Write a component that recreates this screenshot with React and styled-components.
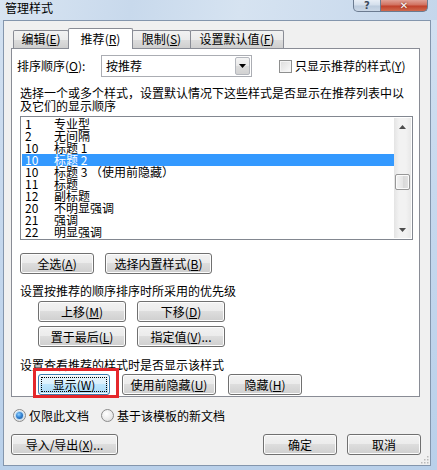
import React from "react";
import styled, { createGlobalStyle, css } from "styled-components";

const GlobalStyle = createGlobalStyle`
  html, body { margin: 0; padding: 0; background: #c9dbef; }
  body { font-family: "Noto Sans CJK SC", "Liberation Sans", sans-serif; font-size: 12px; color: #000; }
  * { box-sizing: border-box; }
`;

const FONT = `"Noto Sans CJK SC", "Liberation Sans", sans-serif`;

const Window = styled.div`
  width: 437px;
  height: 470px;
  display: flex;
  flex-direction: column;
  overflow: hidden;
  background: linear-gradient(180deg, #d3e1f1 0%, #c7d9ee 40%, #b9d0ea 100%);
`;

const TitleBar = styled.div`
  height: 20px;
  display: flex;
  align-items: flex-start;
  padding-left: 5px;
  padding-right: 9px;
  background: linear-gradient(100deg, #d9e5f2 0%, #c8d9ec 30%, #d6e3f1 55%, #c4d6eb 100%);
`;

const Title = styled.div`
  font: 12px/16px ${FONT};
  color: #000;
`;

const Caption = styled.div`
  margin-left: auto;
  display: flex;
`;

const CapButton = styled.div`
  height: 12px;
  display: flex;
  align-items: center;
  justify-content: center;
  border: 1px solid #6b7b90;
  border-top: none;
  font: bold 10px/10px "DejaVu Sans", sans-serif;
  ${(p) =>
    p.$close
      ? css`
          width: 47px;
          border-left: none;
          border-radius: 0 0 5px 0;
          color: #fff;
          background: linear-gradient(180deg, #e0a196 0%, #d1715f 45%, #c0412b 55%, #cf6a4e 100%);
          text-shadow: 0 0 2px #5a1a10;
        `
      : css`
          width: 28px;
          border-radius: 0 0 0 5px;
          color: #3b4a5c;
          background: linear-gradient(180deg, #e8eef6 0%, #d4dfec 45%, #bccbdd 55%, #cbd8e7 100%);
        `}
`;

const Client = styled.div`
  position: relative;
  margin-left: 3px;
  width: 428px;
  height: 446px;
  border: 1px solid #8496ad;
  background: #f0f0f0;
  padding: 7px 9px 0 7px;
  display: flex;
  flex-direction: column;
`;

const TabStrip = styled.div`
  display: flex;
  align-items: flex-start;
  height: 21px;
  margin-bottom: -1px;
  padding-left: 2px;
  position: relative;
  z-index: 1;
`;

const Tab = styled.div`
  width: ${(p) => p.$w}px;
  margin-left: ${(p) => (p.$first ? 0 : -1)}px;
  border: 1px solid #898c95;
  border-bottom: none;
  border-radius: 2px 2px 0 0;
  font: 12px/16px ${FONT};
  text-align: center;
  white-space: nowrap;
  ${(p) =>
    p.$active
      ? css`
          height: 21px;
          background: #fff;
          padding-top: 2px;
          position: relative;
          z-index: 2;
        `
      : css`
          height: 18px;
          margin-top: 2px;
          background: linear-gradient(180deg, #f2f2f2 0%, #ebebeb 50%, #dddddd 51%, #cfcfcf 100%);
          padding-top: 0px;
        `}
`;

const Panel = styled.div`
  width: 409px;
  height: 349px;
  border: 1px solid #898c95;
  background: #fff;
  display: flex;
  flex-direction: column;
`;

const SortRow = styled.div`
  display: flex;
  align-items: center;
  margin-top: 6px;
  margin-left: 5px;
  height: 22px;
`;

const Label = styled.span`
  font: 12px/14px ${FONT};
  white-space: nowrap;
  width: ${(p) => (p.$w ? `${p.$w}px` : "auto")};
`;

const Combo = styled.div`
  width: 151px;
  height: 22px;
  border: 1px solid #abadb3;
  background: #fff;
  display: flex;
  align-items: center;
  padding: 1px;
`;

const ComboText = styled.span`
  flex: 1;
  font: 12px/14px ${FONT};
  padding-left: 3px;
`;

const ComboArrow = styled.div`
  width: 15px;
  height: 18px;
  border: 1px solid #b4b7bd;
  border-radius: 2px;
  background: linear-gradient(180deg, #f4f4f4 0%, #e9e9e9 50%, #dcdcdc 51%, #d2d2d2 100%);
  display: flex;
  align-items: center;
  justify-content: center;
`;

const CheckWrap = styled.label`
  display: flex;
  align-items: center;
  margin-left: 27px;
  gap: 3px;
`;

const Box = styled.span`
  width: 13px;
  height: 13px;
  border: 1px solid #8e8f8f;
  background: linear-gradient(135deg, #dcdcdc 0%, #eeeeee 60%, #fbfbfb 100%);
  box-shadow: inset 0 0 0 1px #f4f4f4;
`;

const Para = styled.div`
  margin-left: 8px;
  width: 393px;
  margin-top: ${(p) => p.$mt}px;
  font: 12px/13px ${FONT};
`;

const ListBox = styled.div`
  margin-left: 8px;
  margin-top: 4px;
  width: 393px;
  height: 124px;
  border: 1px solid #828790;
  padding: 1px;
  display: flex;
  background: #fff;
`;

const Rows = styled.div`
  flex: 1;
  display: flex;
  flex-direction: column;
  overflow: hidden;
`;

const Row = styled.div`
  height: 12px;
  display: flex;
  align-items: center;
  font: 12px/12px ${FONT};
  white-space: nowrap;
  padding-left: 3px;
  background: ${(p) => (p.$sel ? "#3399ff" : "transparent")};
  color: ${(p) => (p.$sel ? "#fff" : "#000")};
`;

const Num = styled.span`
  width: 29px;
`;

const ScrollBar = styled.div`
  width: 17px;
  display: flex;
  flex-direction: column;
  align-items: center;
  background: linear-gradient(90deg, #e4e4e4 0%, #f2f2f2 30%, #f2f2f2 70%, #e8e8e8 100%);
`;

const ScrollArrow = styled.div`
  height: 17px;
  width: 17px;
  display: flex;
  align-items: center;
  justify-content: center;
`;

const Thumb = styled.div`
  width: 15px;
  height: 16px;
  margin-top: ${(p) => p.$top}px;
  border: 1px solid #979797;
  border-radius: 2px;
  background: linear-gradient(90deg, #f3f3f3 0%, #e6e6e6 50%, #d8d8d8 51%, #e3e3e3 100%);
  box-shadow: inset 0 0 0 1px #fbfbfb;
`;

const Spacer = styled.div`
  flex: 1;
`;

const ButtonRow = styled.div`
  display: flex;
  gap: ${(p) => p.$gap || 11}px;
  margin-left: ${(p) => p.$ml}px;
  margin-top: ${(p) => p.$mt}px;
`;

const ButtonGrid = styled.div`
  display: grid;
  grid-template-columns: 88px 88px;
  column-gap: 11px;
  row-gap: 4px;
  margin-left: 26px;
  margin-top: 4px;
`;

const Button = styled.button`
  width: ${(p) => p.$w}px;
  height: 21px;
  padding: 0;
  font: 12px/17px ${FONT};
  color: #000;
  white-space: nowrap;
  border: 1px solid #707070;
  border-radius: 3px;
  background: linear-gradient(180deg, #f2f2f2 0%, #ebebeb 49%, #dddddd 50%, #cfcfcf 100%);
  box-shadow: inset 0 0 0 1px #fcfcfc;
  ${(p) =>
    p.$focus &&
    css`
      border-color: #3c7fb1;
      background: linear-gradient(180deg, #eaf6fd 0%, #d9f0fc 49%, #bee6fd 50%, #a7d9f5 100%);
      outline: 1px dotted #000;
      outline-offset: -4px;
    `}
`;

const Marked = styled.div`
  position: relative;
  display: flex;
  &::after {
    content: "";
    position: absolute;
    left: -5px;
    top: -6px;
    right: -9px;
    bottom: -3px;
    border: 3px solid #e5272b;
    pointer-events: none;
    z-index: 3;
  }
`;

const RadioRow = styled.div`
  display: flex;
  align-items: center;
  margin-top: 12px;
  margin-left: 2px;
  height: 13px;
`;

const RadioItem = styled.label`
  display: flex;
  align-items: center;
  gap: 3px;
  margin-right: 12px;
`;

const Radio = styled.span`
  width: 13px;
  height: 13px;
  border-radius: 50%;
  border: 1px solid #8b8b8b;
  background: radial-gradient(circle at 40% 35%, #ffffff 0%, #e9e9e9 60%, #d2d2d2 100%);
  display: flex;
  align-items: center;
  justify-content: center;
  &::after {
    content: "";
    width: 7px;
    height: 7px;
    border-radius: 50%;
    display: ${(p) => (p.$checked ? "block" : "none")};
    background: radial-gradient(circle at 40% 35%, #8fd0ff 0%, #2f7fd0 50%, #1a4f94 100%);
    box-shadow: 0 0 0 1px #b7dcf7;
  }
`;

const Footer = styled.div`
  display: flex;
  margin-top: 12px;
  gap: 10px;
`;

const Grip = styled.svg`
  position: absolute;
  right: 1px;
  bottom: 1px;
`;

const Acc = ({ c, after = "" }) => (
  <>
    (<u>{c}</u>){after}
  </>
);

const rows = [
  ["1", "专业型"],
  ["2", "无间隔"],
  ["10", "标题 1"],
  ["10", "标题 2", true],
  ["10", "标题 3 （使用前隐藏）"],
  ["11", "标题"],
  ["12", "副标题"],
  ["20", "不明显强调"],
  ["21", "强调"],
  ["22", "明显强调"],
];

const Tri = ({ up, color = "#000" }) => (
  <svg width="7" height="4" viewBox="0 0 7 4">
    <path d={up ? "M0 4 L3.5 0 L7 4 Z" : "M0 0 L7 0 L3.5 4 Z"} fill={color} />
  </svg>
);

export default function App() {
  return (
    <>
      <GlobalStyle />
      <Window>
        <TitleBar>
          <Title>管理样式</Title>
          <Caption>
            <CapButton>?</CapButton>
            <CapButton $close>✕</CapButton>
          </Caption>
        </TitleBar>
        <Client>
          <TabStrip>
            <Tab $w={56} $first>
              编辑<Acc c="E" />
            </Tab>
            <Tab $w={65} $active>
              推荐<Acc c="R" />
            </Tab>
            <Tab $w={59}>
              限制<Acc c="S" />
            </Tab>
            <Tab $w={94}>
              设置默认值<Acc c="F" />
            </Tab>
          </TabStrip>
          <Panel>
            <SortRow>
              <Label $w={84}>
                排序顺序<Acc c="O" after=":" />
              </Label>
              <Combo>
                <ComboText>按推荐</ComboText>
                <ComboArrow>
                  <Tri />
                </ComboArrow>
              </Combo>
              <CheckWrap>
                <Box />
                <Label>
                  只显示推荐的样式<Acc c="Y" />
                </Label>
              </CheckWrap>
            </SortRow>
            <Para $mt={9}>
              选择一个或多个样式，设置默认情况下这些样式是否显示在推荐列表中以及它们的显示顺序
            </Para>
            <ListBox>
              <Rows>
                {rows.map(([n, name, sel], i) => (
                  <Row key={i} $sel={sel}>
                    <Num>{n}</Num>
                    <span>{name}</span>
                  </Row>
                ))}
              </Rows>
              <ScrollBar>
                <ScrollArrow>
                  <Tri up color="#4d4d4d" />
                </ScrollArrow>
                <Thumb $top={39} />
                <Spacer />
                <ScrollArrow>
                  <Tri color="#4d4d4d" />
                </ScrollArrow>
              </ScrollBar>
            </ListBox>
            <ButtonRow $ml={8} $mt={13}>
              <Button $w={74}>
                全选<Acc c="A" />
              </Button>
              <Button $w={107}>
                选择内置样式<Acc c="B" />
              </Button>
            </ButtonRow>
            <Para $mt={10}>设置按推荐的顺序排序时所采用的优先级</Para>
            <ButtonGrid>
              <Button $w={88}>
                上移<Acc c="M" />
              </Button>
              <Button $w={88}>
                下移<Acc c="D" />
              </Button>
              <Button $w={88}>
                置于最后<Acc c="L" />
              </Button>
              <Button $w={88}>
                指定值<Acc c="V" after="..." />
              </Button>
            </ButtonGrid>
            <Para $mt={11}>设置查看推荐的样式时是否显示该样式</Para>
            <ButtonRow $ml={26} $mt={3} $gap={12}>
              <Marked>
                <Button $w={72} $focus>
                  显示<Acc c="W" />
                </Button>
              </Marked>
              <Button $w={94}>
                使用前隐藏<Acc c="U" />
              </Button>
              <Button $w={74}>
                隐藏<Acc c="H" />
              </Button>
            </ButtonRow>
          </Panel>
          <RadioRow>
            <RadioItem>
              <Radio $checked />
              <Label>仅限此文档</Label>
            </RadioItem>
            <RadioItem>
              <Radio />
              <Label>基于该模板的新文档</Label>
            </RadioItem>
          </RadioRow>
          <Footer>
            <Button $w={107}>
              导入/导出<Acc c="X" after="..." />
            </Button>
            <Spacer />
            <Button $w={74}>确定</Button>
            <Button $w={74}>取消</Button>
          </Footer>
          <Grip width="10" height="10" viewBox="0 0 10 10">
            <g fill="#b9b9b9">
              <rect x="8" y="2" width="1.5" height="1.5" />
              <rect x="5" y="5" width="1.5" height="1.5" />
              <rect x="8" y="5" width="1.5" height="1.5" />
              <rect x="2" y="8" width="1.5" height="1.5" />
              <rect x="5" y="8" width="1.5" height="1.5" />
              <rect x="8" y="8" width="1.5" height="1.5" />
            </g>
          </Grip>
        </Client>
      </Window>
    </>
  );
}
